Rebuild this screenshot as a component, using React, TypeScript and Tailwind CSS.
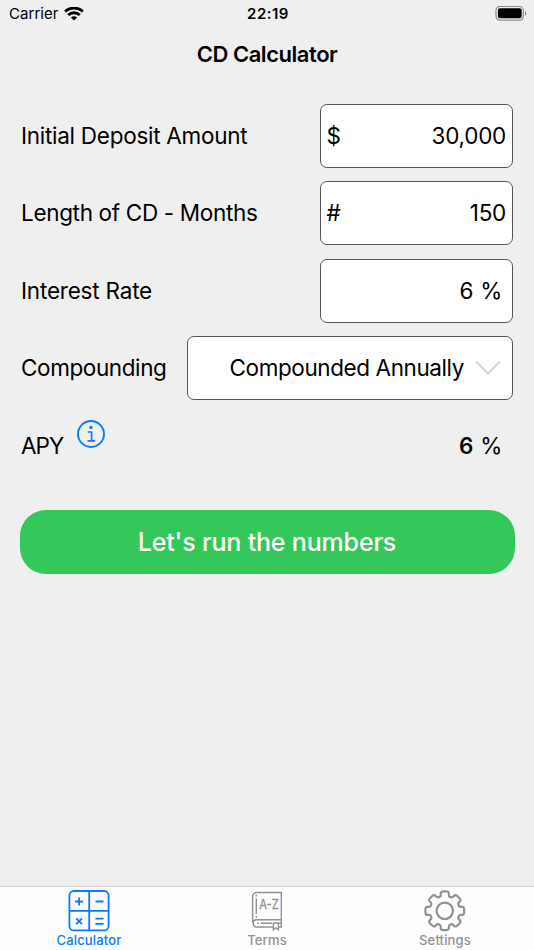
import { ReactNode, useState } from "react";

type TabId = "calculator" | "terms" | "settings";

interface FieldRowProps {
  label: ReactNode;
  children: ReactNode;
}

// Gear outline: eight teeth, every corner rounded off with a quadratic curve.
function gearPath(center: number): string {
  const corners: [number, number][] = [];
  for (let i = 0; i < 8; i++) {
    const base = i * 45 - 90;
    corners.push([15, base - 15], [19.8, base - 12], [19.8, base + 12], [15, base + 15]);
  }
  const points = corners.map(([r, deg]) => {
    const a = (deg * Math.PI) / 180;
    return [center + r * Math.cos(a), center + r * Math.sin(a)];
  });
  const towards = (from: number[], to: number[], t: number) =>
    `${(from[0] + (to[0] - from[0]) * t).toFixed(2)} ${(from[1] + (to[1] - from[1]) * t).toFixed(2)}`;
  const parts = points.map((p, i) => {
    const prev = points[(i + points.length - 1) % points.length];
    const next = points[(i + 1) % points.length];
    return `${i === 0 ? "M" : "L"}${towards(p, prev, 0.4)} Q${p[0].toFixed(2)} ${p[1].toFixed(2)} ${towards(p, next, 0.4)}`;
  });
  return `${parts.join(" ")} Z`;
}

function WifiIcon() {
  return (
    <svg width="20" height="15" viewBox="0 0 20 15" fill="none" stroke="#000" strokeWidth="2.8">
      <path d="M1.1 4.6a12.8 12.8 0 0 1 17.8 0" />
      <path d="M4.2 8.1a8.3 8.3 0 0 1 11.6 0" />
      <path d="M10 13.6l-3.1-3.1a4.4 4.4 0 0 1 6.2 0z" fill="#000" stroke="none" />
    </svg>
  );
}

function BatteryIcon() {
  return (
    <svg width="32" height="16" viewBox="0 0 32 16">
      <rect x="1" y="0.4" width="27.4" height="13.8" rx="4" fill="none" stroke="#8e8e8e" strokeWidth="1.2" />
      <rect x="2.9" y="2.3" width="23.8" height="10" rx="2" fill="#000" />
      <path d="M30 5.1c1.8.6 1.8 4 0 4.6z" fill="#8e8e8e" />
    </svg>
  );
}

function InfoIcon() {
  return (
    <svg width="28" height="28" viewBox="0 0 28 28" fill="none" stroke="#0a7aff">
      <circle cx="14" cy="14" r="13" strokeWidth="1.9" />
      <circle cx="13.9" cy="7.4" r="1.7" fill="#0a7aff" stroke="none" />
      <path d="M11.6 12h3v8.7M11.2 20.8h6.2" strokeWidth="1.7" strokeLinecap="round" strokeLinejoin="round" />
    </svg>
  );
}

function CalculatorIcon() {
  return (
    <svg width="42" height="42" viewBox="0 0 42 42" fill="none" stroke="currentColor" strokeWidth="1.8">
      <rect x="1.4" y="1" width="39.2" height="39.4" rx="4.5" />
      <path d="M21.2 1v39.4M1.4 20.8h39.2" />
      <path d="M7.1 11.5h8M11.1 7.5v8M27.5 11.5h8M27.4 28.7h8.2M27.4 33.8h8.2M8.2 28.4l5.8 5.8M14 28.4l-5.8 5.8" />
    </svg>
  );
}

function TermsIcon() {
  return (
    <svg width="32" height="40" viewBox="0 0 32 40" fill="none" stroke="currentColor" strokeWidth="1.4">
      <path d="M22.4 36H5a3.7 3.7 0 0 1 0-7.2h25.3V1.5H5.6a4 4 0 0 0-4 4V32M30.3 28.8V36h-2.9" />
      <path d="M5.3 3.7v1.7M5.3 7.4v15.5M5.3 25v1.7M6 32.3h1.8M9.8 32.3H21M28 32.3h2" />
      <path d="M22.4 32h5v6.8l-2.5-2-2.5 2z" />
      <text
        x="8.2"
        y="17.8"
        fontSize="12.5"
        textLength="19.5"
        lengthAdjust="spacingAndGlyphs"
        fill="currentColor"
        stroke="currentColor"
        strokeWidth="0.3"
      >
        A-Z
      </text>
    </svg>
  );
}

function SettingsIcon() {
  return (
    <svg width="42" height="42" viewBox="0 0 42 42" fill="none" stroke="currentColor" strokeWidth="2.2">
      <path d={gearPath(20.8)} />
      <circle cx="20.8" cy="20.8" r="8.2" />
    </svg>
  );
}

const TABS: { id: TabId; label: string; icon: ReactNode }[] = [
  { id: "calculator", label: "Calculator", icon: <CalculatorIcon /> },
  { id: "terms", label: "Terms", icon: <TermsIcon /> },
  { id: "settings", label: "Settings", icon: <SettingsIcon /> },
];

function StatusBar() {
  return (
    <div className="grid h-7 grid-cols-3 items-center pr-[7px] pl-[9px] text-[15px]">
      <div className="flex items-center gap-[5px]">
        <span className="tracking-[0.05px]">Carrier</span>
        <WifiIcon />
      </div>
      <span className="text-center font-semibold tracking-[0.5px]">22:19</span>
      <div className="flex justify-end">
        <BatteryIcon />
      </div>
    </div>
  );
}

function FieldRow({ label, children }: FieldRowProps) {
  return (
    <div className="flex h-16 items-center justify-between">
      <div className="whitespace-nowrap">{label}</div>
      {children}
    </div>
  );
}

function ValueBox({ prefix, value }: { prefix?: string; value: string }) {
  return (
    <div className="flex h-full w-[193.5px] items-center justify-between rounded-[7px] border border-[#555] bg-white px-1.5">
      <span>{prefix}</span>
      <span>{value}</span>
    </div>
  );
}

export default function App() {
  const [tab, setTab] = useState<TabId>("calculator");

  return (
    <div className="flex h-[950px] w-[534px] flex-col bg-[#efefef] font-['Inter',sans-serif] text-black">
      <StatusBar />
      <h1 className="mt-2.5 text-center text-[22px] leading-8 font-semibold tracking-[-0.45px]">CD Calculator</h1>

      <main className="flex flex-1 flex-col pt-[33.5px] text-[22.5px] tracking-[-0.27px]">
        <div className="flex flex-col gap-[13.5px] pr-[21px] pl-[21px]">
          <FieldRow label="Initial Deposit Amount">
            <ValueBox prefix="$" value="30,000" />
          </FieldRow>
          <FieldRow label={<span className="tracking-[-0.33px]">Length of CD - Months</span>}>
            <ValueBox prefix="#" value="150" />
          </FieldRow>
          <FieldRow label={<span className="tracking-[-0.2px]">Interest Rate</span>}>
            <div className="flex h-full w-[193.5px] items-center justify-end gap-[7px] rounded-[7px] border border-[#555] bg-white pr-2.5">
              <span>6</span>
              <span>%</span>
            </div>
          </FieldRow>
          <FieldRow label={<span className="tracking-[-0.4px]">Compounding</span>}>
            <button className="flex h-full w-[326.5px] items-center justify-end gap-[11px] rounded-[7px] border border-[#555] bg-white pr-[11px]">
              <span className="tracking-[-0.41px]">Compounded Annually</span>
              <svg width="26" height="16" viewBox="0 0 26 16" fill="none" stroke="#d0d0d0" strokeWidth="1.8">
                <path d="M1 1.5l12 12 12-12" />
              </svg>
            </button>
          </FieldRow>
          <FieldRow
            label={
              <div className="flex items-center gap-3.5">
                <span className="tracking-[-0.95px]">APY</span>
                <button className="mb-6" aria-label="About APY">
                  <InfoIcon />
                </button>
              </div>
            }
          >
            <div className="flex items-center gap-[7px] pr-[11px]">
              <span className="font-semibold">6</span>
              <span>%</span>
            </div>
          </FieldRow>
        </div>

        <button className="mx-[19.5px] mt-8 h-16 rounded-[26px] bg-[#34c759] pt-0.5 text-[25px] font-medium tracking-[-0.18px] text-white">
          Let&apos;s run the numbers
        </button>
      </main>

      <nav className="grid h-16 grid-cols-3 border-t border-[#cfcfcf] bg-[#fdfdfd]">
        {TABS.map(({ id, label, icon }) => (
          <button
            key={id}
            onClick={() => setTab(id)}
            className={`flex flex-col items-center pt-[3px] ${tab === id ? "text-[#0a7aff]" : "text-[#929292]"}`}
          >
            <span className="flex h-[42px] items-center">{icon}</span>
            <span className="text-[13px] leading-4 font-medium tracking-[0.15px]">{label}</span>
          </button>
        ))}
      </nav>
    </div>
  );
}
